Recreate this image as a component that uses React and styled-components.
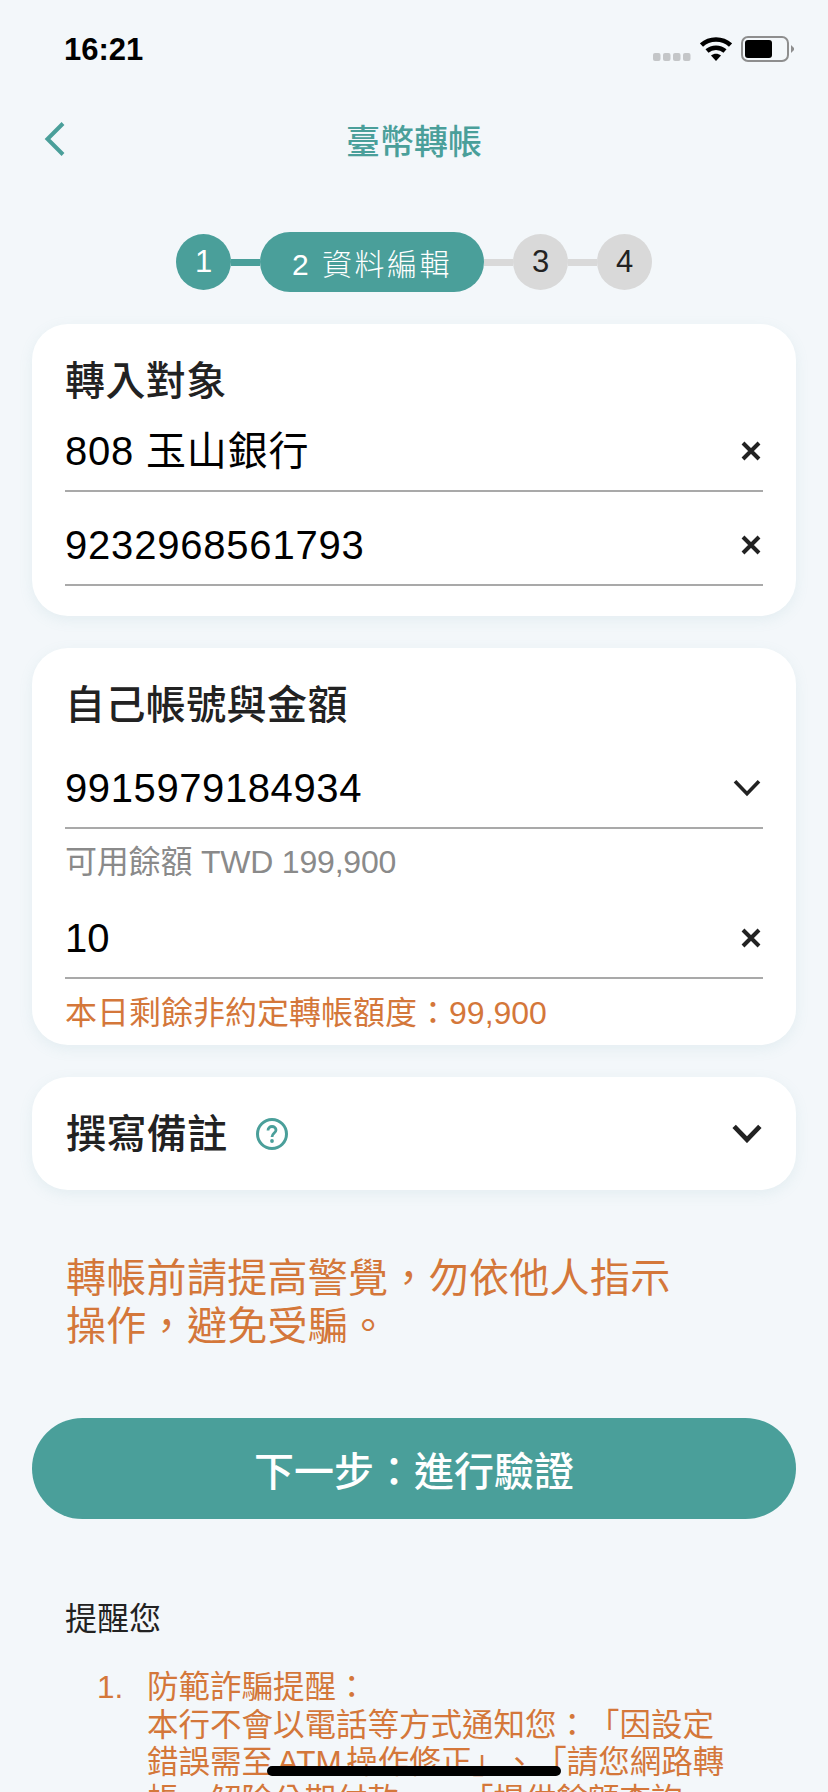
import React from 'react';
import styled, { createGlobalStyle } from 'styled-components';

const teal = '#4a9f9a';
const orange = '#d4773a';
const ink = '#222222';
const cjk = '"Liberation Sans", "Noto Sans CJK TC", sans-serif';

// full-width punctuation
const COMMA = '\uFF0C';
const COLON = '\uFF1A';

const GlobalStyle = createGlobalStyle`
  html, body {
    margin: 0;
    padding: 0;
    background: #f3f7fa;
  }
  * {
    box-sizing: border-box;
  }
`;

const Screen = styled.div`
  position: relative;
  width: 828px;
  height: 1792px;
  overflow: hidden;
  background: #f3f7fa;
  font-family: ${cjk};
  color: ${ink};
  text-spacing-trim: space-all;
`;

const StatusBar = styled.div`
  height: 100px;
  padding: 30px 34px 0 64px;
  display: flex;
  justify-content: space-between;
  align-items: flex-start;
`;

const Time = styled.div`
  font-size: 31px;
  line-height: 40px;
  font-weight: 700;
  color: #000;
`;

const StatusIcons = styled.div`
  display: flex;
  align-items: center;
  height: 38px;
  gap: 9px;
`;

const SignalWrap = styled.div`
  display: flex;
  margin-top: 16px;
`;

const NavBar = styled.div`
  position: relative;
  height: 78px;
  display: flex;
  align-items: center;
  justify-content: center;
`;

const BackButton = styled.div`
  position: absolute;
  left: 42px;
  top: 20px;
  display: flex;
`;

const NavTitle = styled.div`
  font-size: 34px;
  font-weight: 500;
  color: ${teal};
`;

const Stepper = styled.div`
  margin-top: 54px;
  height: 60px;
  display: flex;
  align-items: center;
  justify-content: center;
`;

const Step = styled.div`
  width: 55px;
  height: 56px;
  border-radius: 50%;
  display: flex;
  align-items: center;
  justify-content: center;
  font-size: 31px;
  font-weight: 300;
  background: ${(p) => (p.$done ? teal : '#d9d9d9')};
  color: ${(p) => (p.$done ? '#fff' : ink)};
`;

const ActiveStep = styled.div`
  width: 224px;
  height: 60px;
  border-radius: 30px;
  background: ${teal};
  color: #fff;
  display: flex;
  align-items: center;
  justify-content: center;
  font-size: 30px;
  font-weight: 300;
  letter-spacing: 2.5px;
  white-space: pre;
`;

const Connector = styled.div`
  width: 29px;
  height: 7px;
  background: ${(p) => (p.$done ? teal : '#d9d9d9')};
`;

const Content = styled.div`
  padding: 32px 32px 0;
`;

const Card = styled.section`
  background: #fff;
  border-radius: 36px;
  padding: ${(p) => p.$padding};
  height: ${(p) => p.$height}px;
  margin-bottom: ${(p) => p.$gap}px;
  box-shadow: 0 4px 14px rgba(120, 170, 180, 0.12);
`;

const CardTitle = styled.h2`
  margin: 0;
  font-size: 40px;
  line-height: 48px;
  font-weight: 500;
  letter-spacing: 0.4px;
  color: ${ink};
`;

const Field = styled.div`
  height: 80px;
  margin-top: ${(p) => p.$top}px;
  display: flex;
  align-items: center;
  justify-content: space-between;
  border-bottom: 2px solid #a9a9a9;
  padding-right: 2px;
`;

const FieldValue = styled.div`
  font-size: 40px;
  line-height: 48px;
  color: #000;
  letter-spacing: ${(p) => p.$spacing ?? 0.8}px;
`;

const Hint = styled.div`
  font-size: 32px;
  line-height: 40px;
  margin-top: ${(p) => p.$top}px;
  letter-spacing: ${(p) => (p.$warn ? 0 : -0.2)}px;
  color: ${(p) => (p.$warn ? orange : '#8a8a8a')};
`;

const CollapsedRow = styled.div`
  height: 113px;
  padding: 0 34px;
  display: flex;
  align-items: center;
  justify-content: space-between;
`;

const TitleGroup = styled.div`
  display: flex;
  align-items: center;
  gap: 28px;
`;

const Warning = styled.p`
  margin: 0 0 0 34px;
  width: 624px;
  font-size: 40px;
  line-height: 48px;
  letter-spacing: 0.3px;
  color: ${orange};
`;

const NextButton = styled.button`
  display: block;
  width: 100%;
  height: 101px;
  margin-top: 68px;
  border: 0;
  border-radius: 51px;
  background: ${teal};
  color: #fff;
  font-family: inherit;
  font-size: 40px;
  font-weight: 500;
`;

const NoticeTitle = styled.div`
  margin: 80px 0 0 33px;
  font-size: 32px;
  line-height: 40px;
  color: ${ink};
`;

const NoticeList = styled.ol`
  list-style: none;
  margin: 30px 0 0;
  padding: 0 0 0 65px;
  width: 705px;
  color: ${orange};
  font-size: 31.5px;
  line-height: 37.5px;
`;

const NoticeItem = styled.li`
  display: flex;
`;

const NoticeNumber = styled.span`
  width: 50px;
  flex: none;
`;

const Latin = styled.span`
  margin: 0 4.5px;
`;

const HomeIndicator = styled.div`
  position: absolute;
  left: 267px;
  bottom: 16px;
  width: 294px;
  height: 10px;
  border-radius: 5px;
  background: #000;
`;

const CloseIcon = () => (
  <svg width="20" height="20" viewBox="0 0 20 20">
    <path d="M2 2 L18 18 M18 2 L2 18" stroke={ink} strokeWidth="4" fill="none" />
  </svg>
);

const ChevronIcon = ({ size = 28, weight = 3.6 }) => (
  <svg width={size} height={size * 0.62} viewBox="0 0 28 17">
    <path d="M2 2 L14 14.5 L26 2" stroke={ink} strokeWidth={weight} fill="none" />
  </svg>
);

const HelpIcon = () => (
  <svg width="32" height="32" viewBox="0 0 32 32">
    <circle cx="16" cy="16" r="14.5" stroke={teal} strokeWidth="3" fill="none" />
    <path d="M12 12.5 C12 9.8 14 8.5 16 8.5 C18.3 8.5 20 10 20 12 C20 15 16 15.2 16 19" stroke={teal} strokeWidth="2.8" fill="none" />
    <circle cx="16" cy="23" r="1.9" fill={teal} />
  </svg>
);

const WifiIcon = () => (
  <svg width="32" height="24" viewBox="0 0 32 24">
    <path d="M1.5 8 C9.5 0.5 22.5 0.5 30.5 8" stroke="#000" strokeWidth="4.5" fill="none" />
    <path d="M7 14 C12 9.5 20 9.5 25 14" stroke="#000" strokeWidth="4.5" fill="none" />
    <path d="M11 18.5 L16 24 L21 18.5 C18 16 14 16 11 18.5 Z" fill="#000" />
  </svg>
);

const BatteryIcon = () => (
  <svg width="53" height="26" viewBox="0 0 53 26">
    <rect x="1" y="1" width="46" height="24" rx="6" stroke="#8e8e8e" strokeWidth="2" fill="none" />
    <rect x="4" y="4" width="27" height="18" rx="3" fill="#000" />
    <path d="M50 9 L53 12 L53 14 L50 17 Z" fill="#8e8e8e" />
  </svg>
);

const SignalIcon = () => (
  <svg width="38" height="8" viewBox="0 0 38 8">
    {[0, 10, 20, 30].map((x) => (
      <rect key={x} x={x} y="0" width="7.5" height="8" rx="2" fill="#c4c6c8" />
    ))}
  </svg>
);

const BackIcon = () => (
  <svg width="24" height="38" viewBox="0 0 24 38">
    <path d="M21 3.5 L5.5 19 L21 34.5" stroke={teal} strokeWidth="4" fill="none" />
  </svg>
);

export default function App() {
  return (
    <Screen>
      <GlobalStyle />
      <StatusBar>
        <Time>16:21</Time>
        <StatusIcons>
          <SignalWrap>
            <SignalIcon />
          </SignalWrap>
          <WifiIcon />
          <BatteryIcon />
        </StatusIcons>
      </StatusBar>
      <NavBar>
        <BackButton>
          <BackIcon />
        </BackButton>
        <NavTitle>臺幣轉帳</NavTitle>
      </NavBar>
      <Stepper>
        <Step $done>1</Step>
        <Connector $done />
        <ActiveStep>2 資料編輯</ActiveStep>
        <Connector />
        <Step>3</Step>
        <Connector />
        <Step>4</Step>
      </Stepper>
      <Content>
        <Card $height={292} $gap={32} $padding="33px 33px 0">
          <CardTitle>轉入對象</CardTitle>
          <Field $top={7}>
            <FieldValue>808 玉山銀行</FieldValue>
            <CloseIcon />
          </Field>
          <Field $top={14}>
            <FieldValue>9232968561793</FieldValue>
            <CloseIcon />
          </Field>
        </Card>
        <Card $height={397} $gap={32} $padding="33px 33px 0">
          <CardTitle>自己帳號與金額</CardTitle>
          <Field $top={20}>
            <FieldValue $spacing={0.6}>9915979184934</FieldValue>
            <ChevronIcon />
          </Field>
          <Hint $top={13}>可用餘額 TWD 199,900</Hint>
          <Field $top={17}>
            <FieldValue $spacing={0}>10</FieldValue>
            <CloseIcon />
          </Field>
          <Hint $warn $top={14}>本日剩餘非約定轉帳額度{COLON}99,900</Hint>
        </Card>
        <Card $height={113} $gap={64} $padding="0">
          <CollapsedRow>
            <TitleGroup>
              <CardTitle>撰寫備註</CardTitle>
              <HelpIcon />
            </TitleGroup>
            <ChevronIcon size={30} weight={4.4} />
          </CollapsedRow>
        </Card>
        <Warning>轉帳前請提高警覺{COMMA}勿依他人指示操作{COMMA}避免受騙。</Warning>
        <NextButton>下一步{COLON}進行驗證</NextButton>
        <NoticeTitle>提醒您</NoticeTitle>
        <NoticeList>
          <NoticeItem>
            <NoticeNumber>1.</NoticeNumber>
            <div>
              防範詐騙提醒{COLON}
              <br />
              本行不會以電話等方式通知您{COLON}「因設定錯誤需至<Latin>ATM</Latin>操作修正」、「請您網路轉帳{COMMA}解除分期付款」、「提供餘額查詢
            </div>
          </NoticeItem>
        </NoticeList>
      </Content>
      <HomeIndicator />
    </Screen>
  );
}
